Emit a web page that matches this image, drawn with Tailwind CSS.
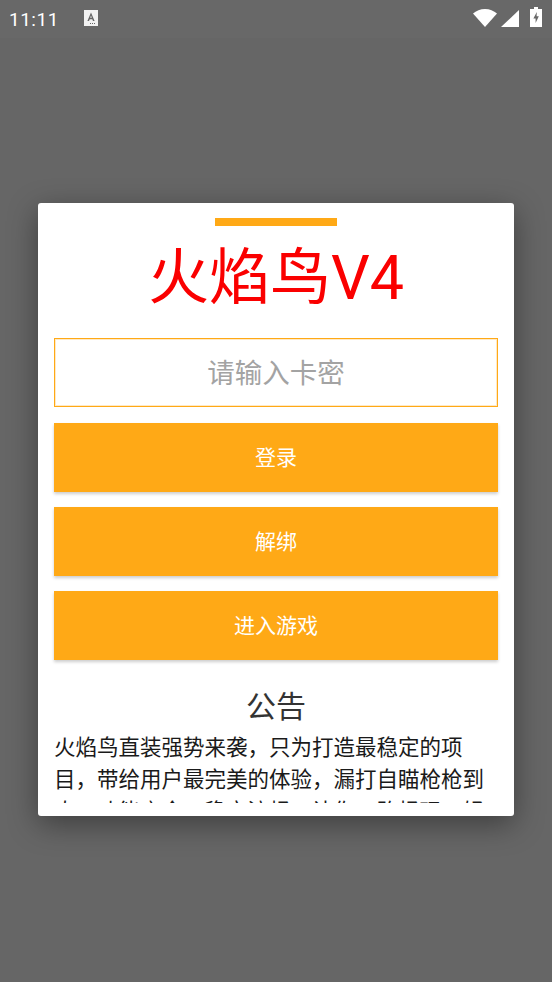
<!DOCTYPE html>
<html lang="zh">

<head>
    <meta charset="UTF-8">
    <meta name="viewport" content="width=device-width, initial-scale=1.0">
    <title>火焰鸟V4</title>
    <script src="https://cdn.jsdelivr.net/npm/@tailwindcss/browser@4"></script>
</head>

<body class="bg-[#666666] font-['Roboto','Noto_Sans_CJK_SC',sans-serif]">
    <div class="h-[982px] w-[552px] overflow-hidden">
        <!-- Status bar -->
        <div class="flex h-[38px] items-center bg-[#686868] pl-[9px] pr-[10px] text-white">
            <span class="text-[19px] leading-none tracking-[0.5px] text-white">11:11</span>
            <svg class="mb-[2px] ml-[25px]" width="14" height="16" viewBox="0 0 14 16">
                <path fill="#f2f2f2" d="M0 0h14v16H0z" />
                <path fill="#666666" d="M7 2.5 10.6 11H9L8.3 9.2H5.7L5 11H3.4zM7 5.6 6.2 7.8h1.6zM6 13h1v1H6zM8 13h1v1H8zM10 13h1v1h-1z" />
            </svg>
            <div class="ml-auto flex items-center">
                <svg class="mb-[2px]" width="24" height="18" viewBox="0 0 24 18">
                    <path fill="#ffffff" d="M12 18 0 4.6C3.2 1.8 7.4 0 12 0s8.800 1.800 12 4.600z" />
                </svg>
                <svg class="mb-[1px] ml-[4px]" width="18" height="17" viewBox="0 0 18 17">
                    <path fill="#ffffff" d="M0 17 18 0v17z" />
                </svg>
                <svg class="mb-[4px] ml-[11px]" width="12" height="20" viewBox="0 0 12 20">
                    <path fill="#ffffff" fill-rule="evenodd" d="M4 0h4v2h4v18H0V2h4zM6.800 5 3.400 11.500h2.200V16l3.200-6.800H6.600z" />
                </svg>
            </div>
        </div>

        <!-- Login dialog -->
        <div class="mx-[38px] mt-[165px] h-[613px] overflow-hidden rounded-[3px] bg-white px-4 shadow-[0_8px_30px_rgba(0,0,0,0.4)]">
            <div class="mx-auto mt-[15px] h-2 w-[122px] bg-[#ffa916]"></div>
            <h1 class="mt-[12px] text-center text-[61px] leading-[80px] text-[#fa0000]">火焰鸟V4</h1>

            <div class="mt-[20px] flex h-[69px] items-center justify-center border border-[#ffa916] pt-[2px] text-[27.5px] text-[#a3a3a3] shadow-[inset_0_0_0_1px_rgba(255,169,22,0.25)]">请输入卡密</div>

            <button class="mt-4 block h-[69px] w-full bg-[#ffa916] pt-[2px] text-[21px] text-white shadow-[0_2px_3px_rgba(0,0,0,0.2)]">登录</button>
            <button class="mt-[15px] block h-[69px] w-full bg-[#ffa916] pt-[2px] text-[21px] text-white shadow-[0_2px_3px_rgba(0,0,0,0.2)]">解绑</button>
            <button class="mt-[15px] block h-[69px] w-full bg-[#ffa916] pt-[2px] text-[21px] text-white shadow-[0_2px_3px_rgba(0,0,0,0.2)]">进入游戏</button>

            <!-- Notice -->
            <h2 class="mt-[26px] text-center text-[30px] leading-[42px] text-[#333333]">公告</h2>
            <div class="mt-[4px] h-[71px] overflow-hidden">
                <p class="text-[21.5px] leading-[32px] text-[#1a1a1a]">火焰鸟直装强势来袭，只为打造最稳定的项目，带给用户最完美的体验，漏打自瞄枪枪到肉，功能齐全，稳定流畅，让你一路畅玩，轻松上分。</p>
            </div>
        </div>
    </div>
</body>

</html>
